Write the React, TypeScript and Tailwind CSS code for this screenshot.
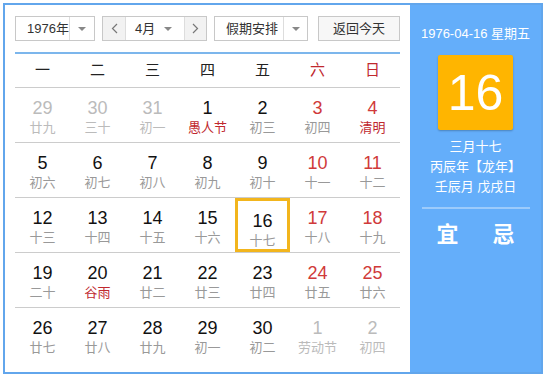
import React from 'react';

type Day = { d: number; l: string; other?: boolean; red?: boolean; lred?: boolean; sel?: boolean };

const weeks: Day[][] = [
  [
    { d: 29, l: '廿九', other: true },
    { d: 30, l: '三十', other: true },
    { d: 31, l: '初一', other: true },
    { d: 1, l: '愚人节', lred: true },
    { d: 2, l: '初三' },
    { d: 3, l: '初四', red: true },
    { d: 4, l: '清明', red: true, lred: true },
  ],
  [
    { d: 5, l: '初六' },
    { d: 6, l: '初七' },
    { d: 7, l: '初八' },
    { d: 8, l: '初九' },
    { d: 9, l: '初十' },
    { d: 10, l: '十一', red: true },
    { d: 11, l: '十二', red: true },
  ],
  [
    { d: 12, l: '十三' },
    { d: 13, l: '十四' },
    { d: 14, l: '十五' },
    { d: 15, l: '十六' },
    { d: 16, l: '十七', sel: true },
    { d: 17, l: '十八', red: true },
    { d: 18, l: '十九', red: true },
  ],
  [
    { d: 19, l: '二十' },
    { d: 20, l: '谷雨', lred: true },
    { d: 21, l: '廿二' },
    { d: 22, l: '廿三' },
    { d: 23, l: '廿四' },
    { d: 24, l: '廿五', red: true },
    { d: 25, l: '廿六', red: true },
  ],
  [
    { d: 26, l: '廿七' },
    { d: 27, l: '廿八' },
    { d: 28, l: '廿九' },
    { d: 29, l: '初一' },
    { d: 30, l: '初二' },
    { d: 1, l: '劳动节', other: true },
    { d: 2, l: '初四', other: true },
  ],
];

const weekdays = ['一', '二', '三', '四', '五', '六', '日'];

function Caret() {
  return <span className="block w-0 h-0 border-l-[4px] border-r-[4px] border-t-[4px] border-l-transparent border-r-transparent border-t-[#888]" />;
}

function DayCell({ day }: { day: Day }) {
  const numColor = day.other ? 'text-[#bbb]' : day.red ? 'text-[#d03a3a]' : 'text-[#111]';
  const lunarColor = day.other ? 'text-[#bbb]' : day.lred ? 'text-[#c0282e]' : 'text-[#999]';
  return (
    <div
      className={
        'w-[55px] h-full flex flex-col items-center pt-[9px] ' +
        (day.sel ? 'border-[3px] border-[#f2b51d] pt-[6px]' : '')
      }
    >
      <span className={'text-[18px] leading-[22px] ' + numColor}>{day.d}</span>
      <span className={'text-[13px] leading-[16px] mt-[1px] ' + lunarColor}>{day.l}</span>
    </div>
  );
}

export default function App() {
  return (
    <div
      className="w-[549px] h-[384px] bg-white pt-[3px] pl-[3px]"
      style={{ fontFamily: 'Arial, "Liberation Sans", "Noto Sans CJK SC", sans-serif' }}
    >
      <div className="w-[540px] h-[371px] border-2 border-[#62a6ec] flex">
        <div className="w-[405px] pl-[10px] pr-[5px] pt-[11px] flex flex-col">
          <div className="h-[25px] flex text-[13px] text-[#333]">
            <div className="w-[80px] h-full border border-[#c8c8c8] flex">
              <div className="flex-1 flex items-center pl-[11px]">1976年</div>
              <div className="w-[25px] border-l border-[#ddd] flex items-center justify-center">
                <Caret />
              </div>
            </div>
            <div className="ml-[7px] w-[105px] h-full border border-[#c8c8c8] flex">
              <div className="w-[23px] bg-[#f2f2f2] border-r border-[#ddd] flex items-center justify-center text-[#777]">
                <svg width="7" height="11" viewBox="0 0 7 11"><path d="M6 1L1.5 5.5L6 10" stroke="#777" strokeWidth="1.2" fill="none" /></svg>
              </div>
              <div className="flex-1 flex items-center pl-[9px]">4月</div>
              <div className="w-[20px] flex items-center justify-start">
                <Caret />
              </div>
              <div className="w-[22px] bg-[#f2f2f2] border-l border-[#ddd] flex items-center justify-center">
                <svg width="7" height="11" viewBox="0 0 7 11"><path d="M1 1L5.5 5.5L1 10" stroke="#777" strokeWidth="1.2" fill="none" /></svg>
              </div>
            </div>
            <div className="ml-[7px] w-[94px] h-full border border-[#c8c8c8] flex">
              <div className="flex-1 flex items-center pl-[11px]">假期安排</div>
              <div className="w-[24px] border-l border-[#ddd] flex items-center justify-center">
                <Caret />
              </div>
            </div>
            <div className="ml-[10px] w-[82px] h-full border border-[#c8c8c8] bg-[#f7f7f7] flex items-center justify-center">
              返回今天
            </div>
          </div>
          <div className="mt-[11px] w-[385px] h-[2px] bg-[#7cb6ec]" />
          <div className="w-[385px] h-[33px] flex items-center text-[15px]">
            {weekdays.map((w, i) => (
              <div key={w} className={'w-[55px] text-center ' + (i >= 5 ? 'text-[#c0282e]' : 'text-[#222]')}>
                {w}
              </div>
            ))}
          </div>
          <div className="w-[385px] h-px bg-[#ccc]" />
          {weeks.map((wk, i) => (
            <div key={i} className={'w-[385px] h-[55px] flex ' + (i < 4 ? 'border-b border-[#ccc]' : '')}>
              {wk.map((day, j) => (
                <DayCell key={j} day={day} />
              ))}
            </div>
          ))}
        </div>
        <div className="w-[131px] h-full bg-[#64aefa] flex flex-col items-center text-white">
          <div className="mt-[21px] text-[13px] leading-[16px]">1976-04-16 星期五</div>
          <div className="mt-[13px] w-[75px] h-[75px] bg-[#ffb500] rounded-[2px] shadow-[0_1px_2px_rgba(0,0,0,0.25)] flex items-center justify-center text-[50px] leading-none">
            16
          </div>
          <div className="mt-[7px] text-[13px] leading-[20px] text-center">
            <div>三月十七</div>
            <div>丙辰年【龙年】</div>
            <div>壬辰月 戊戌日</div>
          </div>
          <div className="mt-[10px] w-[108px] h-[2px] bg-[#9ccbfb]" />
          <div className="mt-[14px] flex gap-[34px] text-[22px] font-bold leading-[24px]">
            <span>宜</span>
            <span>忌</span>
          </div>
        </div>
      </div>
    </div>
  );
}
